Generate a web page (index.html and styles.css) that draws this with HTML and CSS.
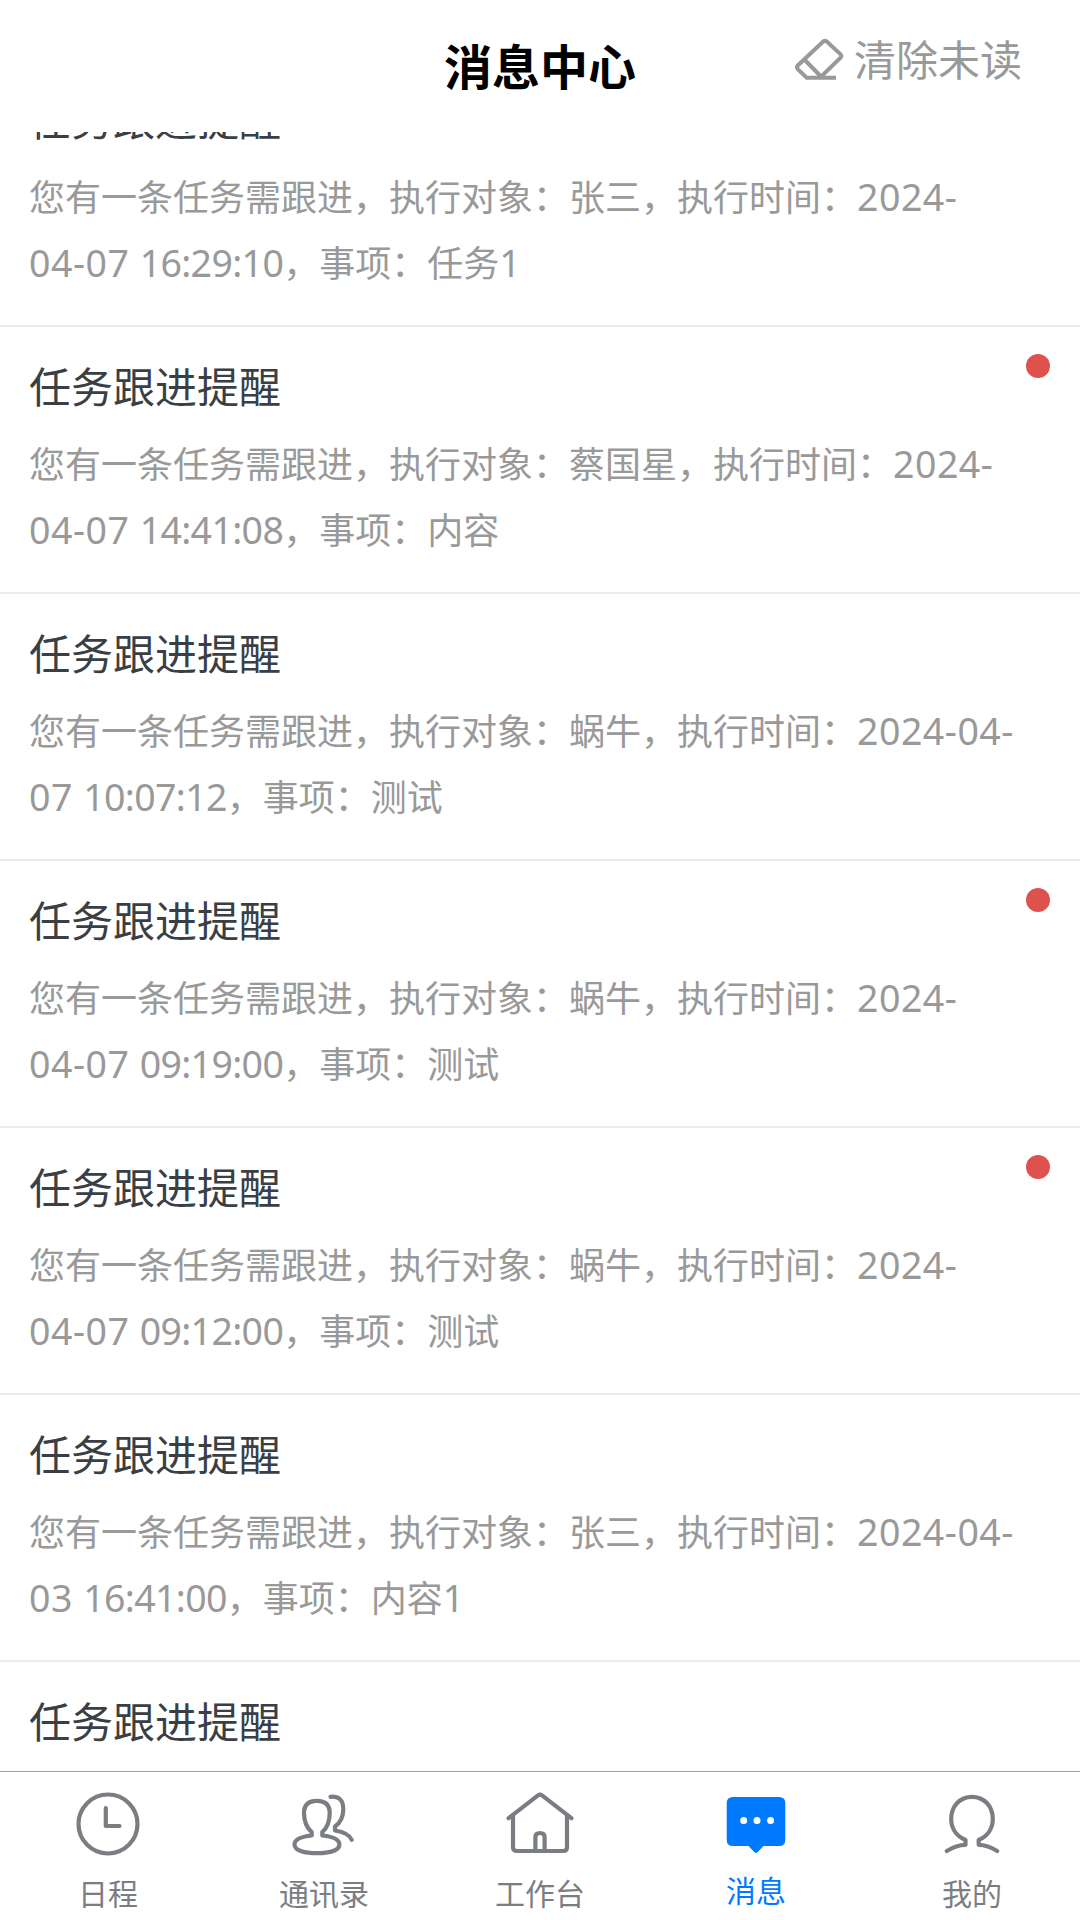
FILE: index.html
```html
<!DOCTYPE html>
<html lang="zh-CN">
<head>
	<meta charset="utf-8">
	<meta name="viewport" content="width=device-width, initial-scale=1">
	<title>消息中心</title>
	<link rel="stylesheet" href="styles.css">
</head>
<body>

	<header class="header">
		<h1>消息中心</h1>
		<div class="clear-btn">
			<svg width="50" height="44" viewBox="0 0 50 44">
				<path d="M28.2 3.6 Q30 2 31.8 3.6 L45.6 16.4 Q47 18 45.6 19.6 L25 39.7 H11.7 L3 31.4 Q1 29.2 3 27.2 Z M10.3 22.5 L26 38.5 M24 39.7 H41"/>
			</svg>
			<span>清除未读</span>
		</div>
	</header>

	<main class="content">
		<div class="list">
			<div class="item">
				<h2>任务跟进提醒</h2>
				<p>您有一条任务需跟进，执行对象：张三，执行时间：<span class="num">2024-04-07 </span><span class="num time">16:29:10</span>，事项：任务<span class="num">1</span></p>
				<i class="dot"></i>
			</div>
			<div class="item">
				<h2>任务跟进提醒</h2>
				<p>您有一条任务需跟进，执行对象：蔡国星，执行时间：<span class="num">2024-04-07 </span><span class="num time">14:41:08</span>，事项：内容</p>
				<i class="dot"></i>
			</div>
			<div class="item read">
				<h2>任务跟进提醒</h2>
				<p>您有一条任务需跟进，执行对象：蜗牛，执行时间：<span class="num">2024-04-07 </span><span class="num time">10:07:12</span>，事项：测试</p>
			</div>
			<div class="item">
				<h2>任务跟进提醒</h2>
				<p>您有一条任务需跟进，执行对象：蜗牛，执行时间：<span class="num">2024-04-07 </span><span class="num time">09:19:00</span>，事项：测试</p>
				<i class="dot"></i>
			</div>
			<div class="item">
				<h2>任务跟进提醒</h2>
				<p>您有一条任务需跟进，执行对象：蜗牛，执行时间：<span class="num">2024-04-07 </span><span class="num time">09:12:00</span>，事项：测试</p>
				<i class="dot"></i>
			</div>
			<div class="item read">
				<h2>任务跟进提醒</h2>
				<p>您有一条任务需跟进，执行对象：张三，执行时间：<span class="num">2024-04-03 </span><span class="num time">16:41:00</span>，事项：内容<span class="num">1</span></p>
			</div>
			<div class="item read">
				<h2>任务跟进提醒</h2>
			</div>
		</div>
	</main>

	<nav class="tabbar">
		<a class="tab">
			<svg viewBox="0 0 100 100">
				<circle cx="50" cy="52" r="29.5"/>
				<path d="M47.8 36 V54 H61.5"/>
			</svg>
			<span>日程</span>
		</a>
		<a class="tab">
			<svg viewBox="0 0 100 100">
				<path d="M37.7 63.5 V60 C33 56 30 50 30 41 C30 32 35 28.8 42.8 28.8 S55.7 32 55.7 41 C55.7 50 53 56 48.3 60 V63.5 C58 64.5 65.4 67.5 65.4 72.5 C65.4 79 54 81.2 42.8 81.2 S20.5 79 20.5 72.5 C20.5 67.5 28 64.5 37.7 63.5"/>
				<path d="M56.5 24.8 C64 24 69.3 27.5 69.3 37 C69.3 45 66 51 61 54.5 V58.5 C70 60 75.5 62.5 77.7 67.8"/>
			</svg>
			<span>通讯录</span>
		</a>
		<a class="tab">
			<svg viewBox="0 0 100 100">
				<path d="M18.6 46.2 L48 23.4 Q50 22 52 23.4 L81.4 46.2"/>
				<path d="M23 44 V75 Q23 79 27 79 H73.5 Q77 79 77 75 V44"/>
				<path d="M45.4 78 V65 Q45.4 61 50 61 T54.6 65 V78"/>
			</svg>
			<span>工作台</span>
		</a>
		<a class="tab active">
			<svg viewBox="0 0 100 100">
				<path class="fill" d="M27 25 H73 Q79.3 25 79.3 31 V68 Q79.3 74 73 74 H57.5 L51.5 80.2 Q50 81.8 48.5 80.2 L42.5 74 H27 Q20.7 74 20.7 68 V31 Q20.7 25 27 25 Z"/>
				<circle class="point" cx="37.7" cy="48.6" r="3.5"/>
				<circle class="point" cx="51" cy="48.6" r="3.5"/>
				<circle class="point" cx="64.6" cy="48.6" r="3.5"/>
			</svg>
			<span>消息</span>
		</a>
		<a class="tab">
			<svg viewBox="0 0 100 100">
				<path d="M24.8 79 C31 75 37 72.8 43.5 72.8 V68 C34 64 29.2 56 29.2 47 C29.2 34 38 24.8 50 24.8 S70.8 34 70.8 47 C70.8 56 66 64 56.7 68 V72.8 C63 72.8 69 75 75.2 79"/>
			</svg>
			<span>我的</span>
		</a>
	</nav>

</body>
</html>
```
FILE: styles.css
```css
*{
    margin: 0;
    padding: 0;
    box-sizing: border-box;
}
body{
    display: flex;
    flex-direction: column;
    height: 100vh;
    overflow: hidden;
    background: #fff;
    font-family: "Noto Sans CJK SC", sans-serif;
}

/* header */
.header{
    position: relative;
    height: 132px;
    flex-shrink: 0;
    text-align: center;
}
.header h1{
    font-size: 48px;
    line-height: 128px;
    color: #000;
}
.clear-btn{
    position: absolute;
    top: 30px;
    right: 58px;
    height: 60px;
    display: flex;
    align-items: center;
    gap: 9px;
    font-size: 42px;
    line-height: 60px;
    color: #999;
}
.clear-btn span{
    margin-top: -4px;
}
.clear-btn svg{
    fill: none;
    stroke: #999;
    stroke-width: 4;
}

/* message list */
.content{
    flex: 1;
    overflow: hidden;
}
.list{
    margin-top: -72px; /* scrolled position */
}
.item{
    position: relative;
    height: 267px;
    padding: 28px 76px 0 29px;
    border-bottom: 2px solid #ebebeb;
}
.item.read{
    padding-right: 50px;
}
.item h2{
    font-size: 42px;
    font-weight: normal;
    line-height: 60px;
    color: #3a3f45;
}
.item p{
    margin-top: 14px;
    font-size: 36px;
    line-height: 66px;
    color: #999;
}
.num{
    font-family: "Noto Sans", sans-serif;
    font-size: 37.5px;
    line-height: 1;
    letter-spacing: 0.5px;
}
.num.time{
    letter-spacing: -0.65px;
}
.dot{
    position: absolute;
    top: 27px;
    right: 30px;
    width: 24px;
    height: 24px;
    border-radius: 50%;
    background: #dd524d;
}

/* bottom tabs */
.tabbar{
    display: flex;
    height: 149px;
    flex-shrink: 0;
    border-top: 1px solid #a0a0a0;
    background: #fff;
}
.tab{
    flex: 1;
    display: flex;
    flex-direction: column;
    align-items: center;
    font-size: 30px;
    line-height: 41px;
    color: #7a7e83;
}
.tab svg{
    width: 100px;
    height: 100px;
    fill: none;
    stroke: currentColor;
    stroke-width: 4.2;
    stroke-linecap: round;
    stroke-linejoin: round;
}
.tab .fill{
    fill: currentColor;
    stroke: none;
}
.tab .point{
    fill: #fff;
    stroke: none;
}
.tab.active{
    color: #007aff;
}
.tab.active span{
    margin-top: -3px;
}
```
